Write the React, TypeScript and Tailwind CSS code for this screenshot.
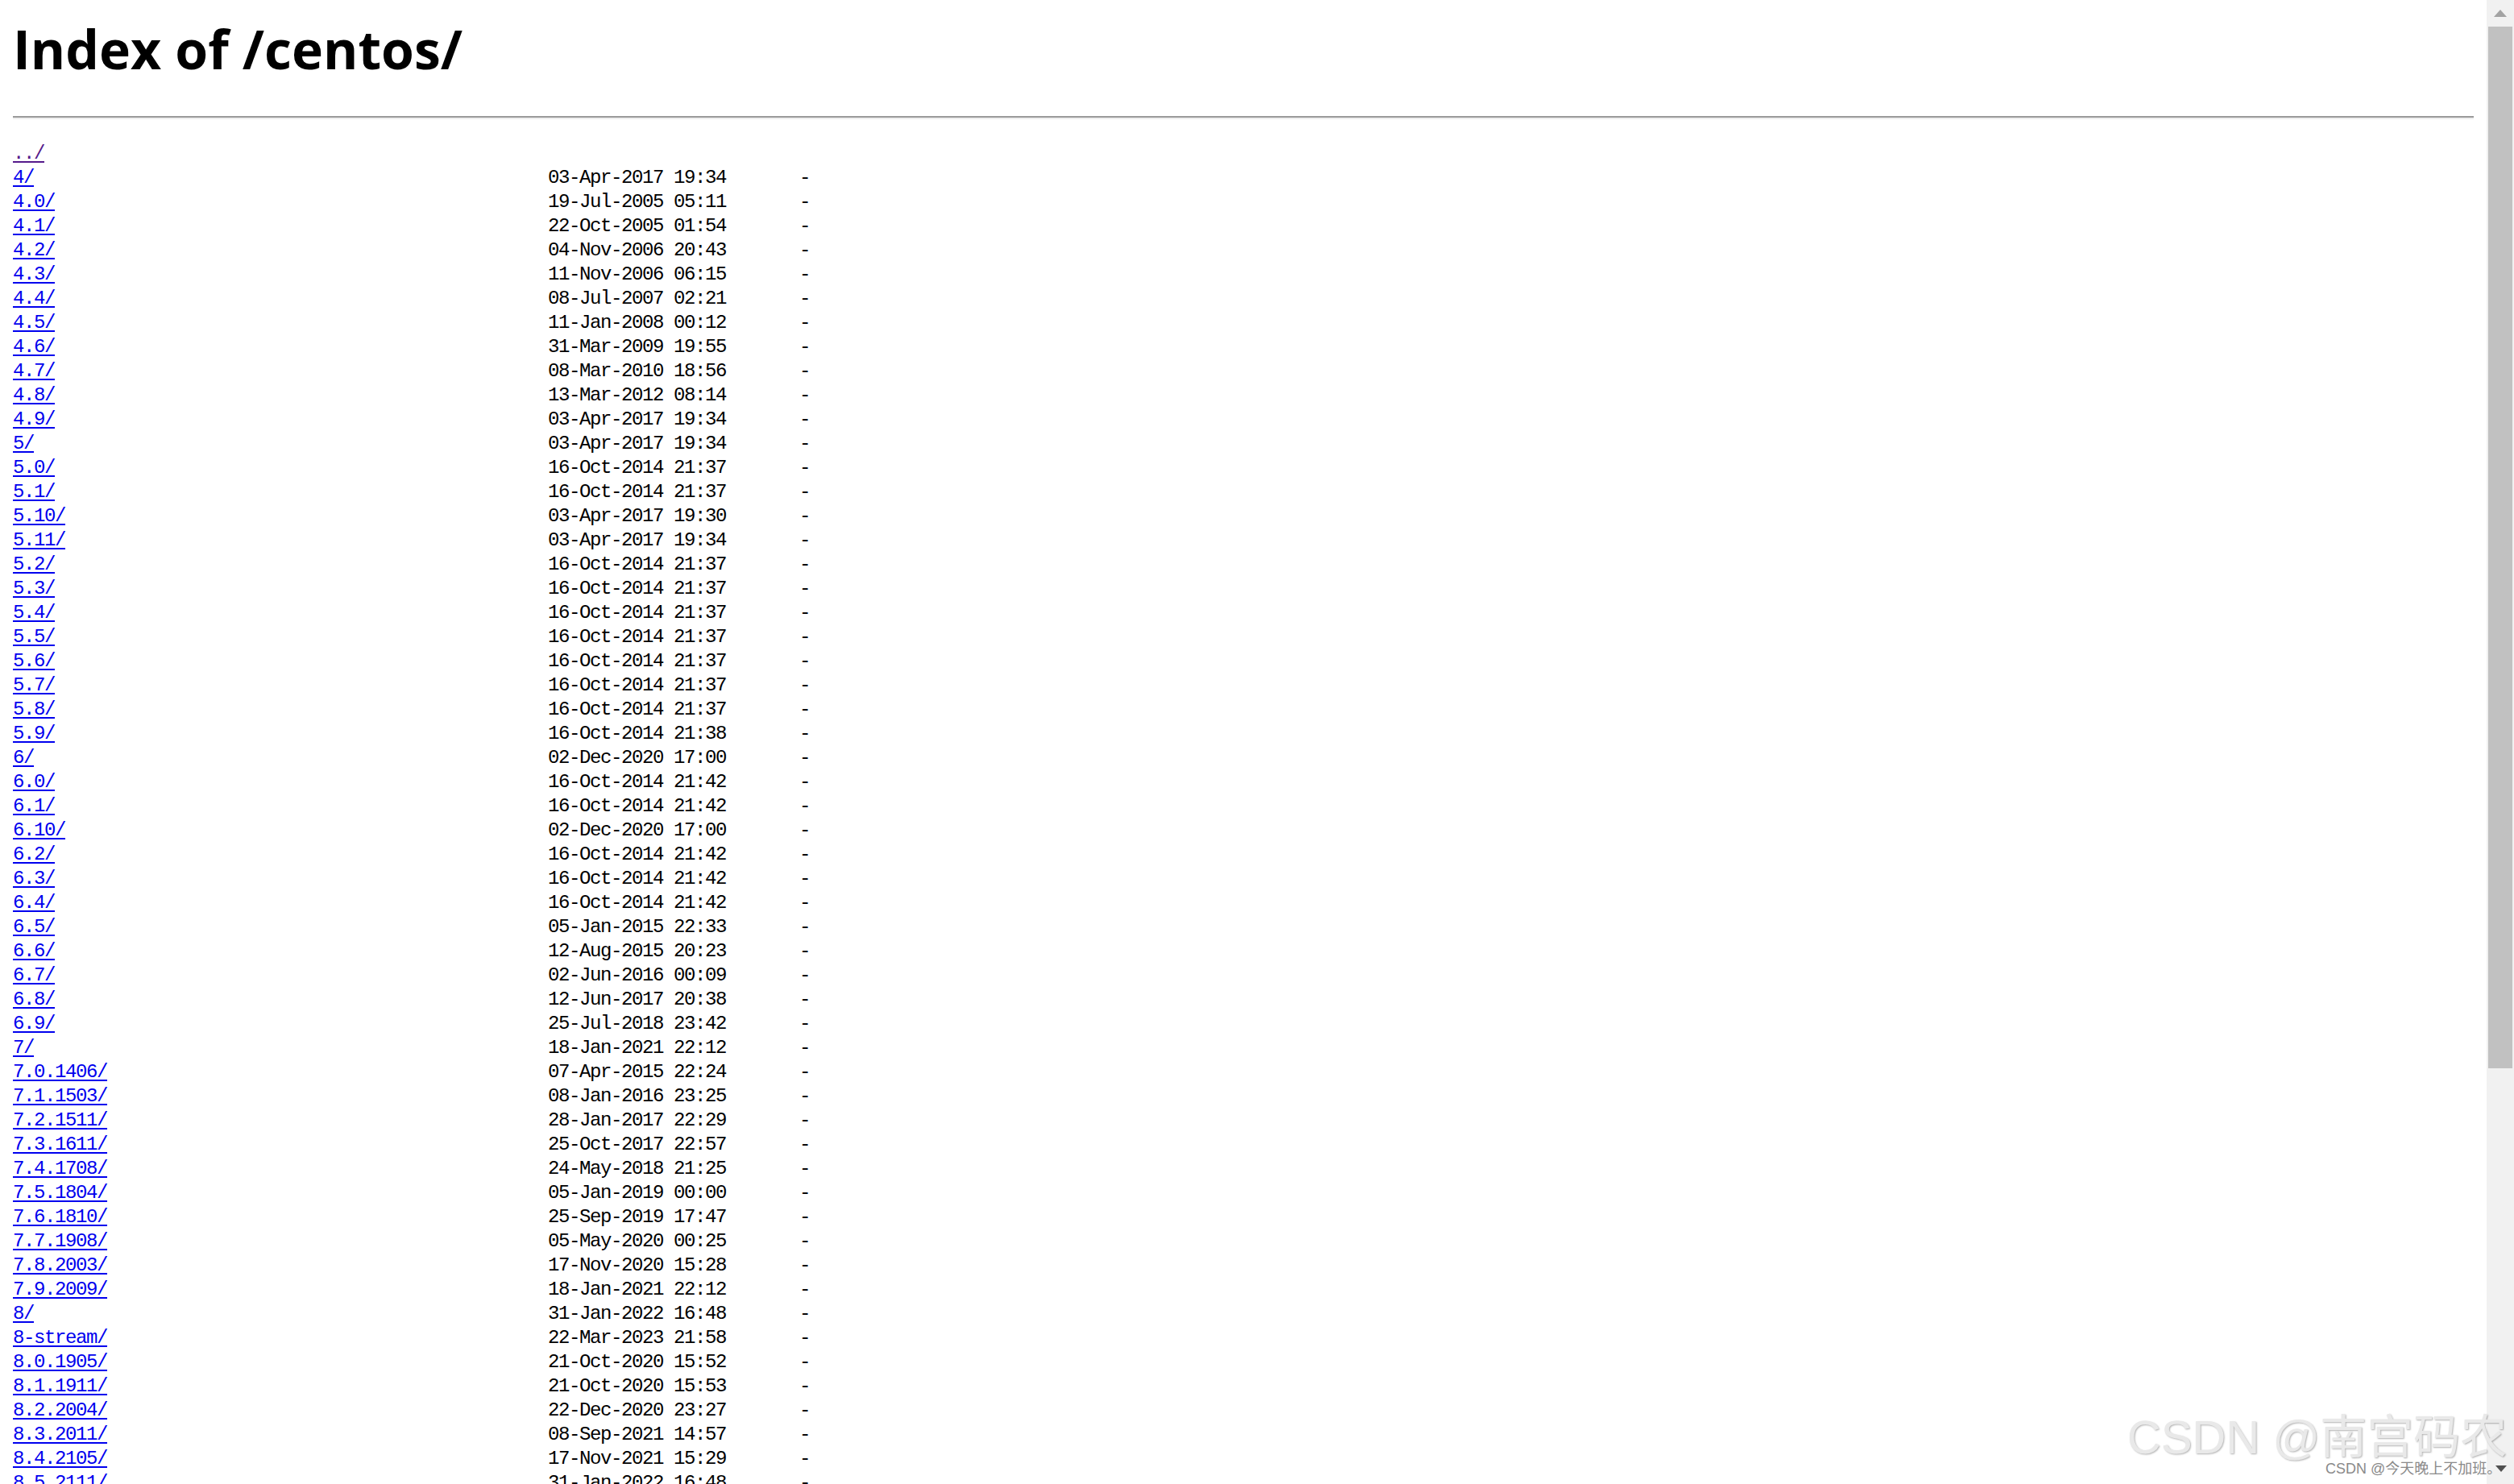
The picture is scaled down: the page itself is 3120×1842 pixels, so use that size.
type Entry = {
  name: string,
  date?: string,
  visited?: boolean
}

const entries: Entry[] = [
  { name: '../', visited: true },
  { name: '4/', date: '03-Apr-2017 19:34' },
  { name: '4.0/', date: '19-Jul-2005 05:11' },
  { name: '4.1/', date: '22-Oct-2005 01:54' },
  { name: '4.2/', date: '04-Nov-2006 20:43' },
  { name: '4.3/', date: '11-Nov-2006 06:15' },
  { name: '4.4/', date: '08-Jul-2007 02:21' },
  { name: '4.5/', date: '11-Jan-2008 00:12' },
  { name: '4.6/', date: '31-Mar-2009 19:55' },
  { name: '4.7/', date: '08-Mar-2010 18:56' },
  { name: '4.8/', date: '13-Mar-2012 08:14' },
  { name: '4.9/', date: '03-Apr-2017 19:34' },
  { name: '5/', date: '03-Apr-2017 19:34' },
  { name: '5.0/', date: '16-Oct-2014 21:37' },
  { name: '5.1/', date: '16-Oct-2014 21:37' },
  { name: '5.10/', date: '03-Apr-2017 19:30' },
  { name: '5.11/', date: '03-Apr-2017 19:34' },
  { name: '5.2/', date: '16-Oct-2014 21:37' },
  { name: '5.3/', date: '16-Oct-2014 21:37' },
  { name: '5.4/', date: '16-Oct-2014 21:37' },
  { name: '5.5/', date: '16-Oct-2014 21:37' },
  { name: '5.6/', date: '16-Oct-2014 21:37' },
  { name: '5.7/', date: '16-Oct-2014 21:37' },
  { name: '5.8/', date: '16-Oct-2014 21:37' },
  { name: '5.9/', date: '16-Oct-2014 21:38' },
  { name: '6/', date: '02-Dec-2020 17:00' },
  { name: '6.0/', date: '16-Oct-2014 21:42' },
  { name: '6.1/', date: '16-Oct-2014 21:42' },
  { name: '6.10/', date: '02-Dec-2020 17:00' },
  { name: '6.2/', date: '16-Oct-2014 21:42' },
  { name: '6.3/', date: '16-Oct-2014 21:42' },
  { name: '6.4/', date: '16-Oct-2014 21:42' },
  { name: '6.5/', date: '05-Jan-2015 22:33' },
  { name: '6.6/', date: '12-Aug-2015 20:23' },
  { name: '6.7/', date: '02-Jun-2016 00:09' },
  { name: '6.8/', date: '12-Jun-2017 20:38' },
  { name: '6.9/', date: '25-Jul-2018 23:42' },
  { name: '7/', date: '18-Jan-2021 22:12' },
  { name: '7.0.1406/', date: '07-Apr-2015 22:24' },
  { name: '7.1.1503/', date: '08-Jan-2016 23:25' },
  { name: '7.2.1511/', date: '28-Jan-2017 22:29' },
  { name: '7.3.1611/', date: '25-Oct-2017 22:57' },
  { name: '7.4.1708/', date: '24-May-2018 21:25' },
  { name: '7.5.1804/', date: '05-Jan-2019 00:00' },
  { name: '7.6.1810/', date: '25-Sep-2019 17:47' },
  { name: '7.7.1908/', date: '05-May-2020 00:25' },
  { name: '7.8.2003/', date: '17-Nov-2020 15:28' },
  { name: '7.9.2009/', date: '18-Jan-2021 22:12' },
  { name: '8/', date: '31-Jan-2022 16:48' },
  { name: '8-stream/', date: '22-Mar-2023 21:58' },
  { name: '8.0.1905/', date: '21-Oct-2020 15:52' },
  { name: '8.1.1911/', date: '21-Oct-2020 15:53' },
  { name: '8.2.2004/', date: '22-Dec-2020 23:27' },
  { name: '8.3.2011/', date: '08-Sep-2021 14:57' },
  { name: '8.4.2105/', date: '17-Nov-2021 15:29' },
  { name: '8.5.2111/', date: '31-Jan-2022 16:48' },
]

function ListingRow({ entry }: { entry: Entry }) {
  return (
    <div className="grid grid-cols-[664px_312px_40px] h-[30px] leading-[30px] whitespace-pre">
      <a
        href="#"
        className={`underline decoration-2 underline-offset-[3px] justify-self-start ${entry.visited ? 'text-[#551a8b]' : 'text-[#0000ee]'}`}
      >
        {entry.name}
      </a>
      <span className="text-black">{entry.date ?? ''}</span>
      <span className="text-black">{entry.date ? '-' : ''}</span>
    </div>
  )
}

function Scrollbar() {
  return (
    <div className="w-[34px] h-full flex flex-col bg-[#f1f1f1] shrink-0">
      <div className="h-[33px] flex items-center justify-center">
        <svg width="16" height="9" viewBox="0 0 16 9">
          <path d="M8 0 L16 9 L0 9 Z" fill="#a3a3a3" />
        </svg>
      </div>
      <div className="h-[1293px] mx-[2px] bg-[#c1c1c1]"></div>
      <div className="flex-1"></div>
      <div className="h-[33px] flex items-start justify-center pt-[10px] pl-[2px]">
        <svg width="14" height="8" viewBox="0 0 14 8">
          <path d="M0 0 L14 0 L7 8 Z" fill="#505050" />
        </svg>
      </div>
    </div>
  )
}

export default function App() {
  return (
    <div className="relative flex w-[3120px] h-[1842px] overflow-hidden bg-white">
      <main className="flex-1 min-w-0 px-4">
        <h1 className="pt-[23px] text-[66px] leading-[74px] font-bold text-black font-['Open_Sans','Noto_Sans',sans-serif]">
          Index of /centos/
        </h1>
        <hr className="mt-[47px] h-0 border-0 border-t-2 border-t-[#9a9a9a] border-b-2 border-b-[#eeeeee]" />
        <div className="mt-[28px] text-[24px] tracking-[-1.4px] font-['Liberation_Mono',monospace]">
          {entries.map((entry) => (
            <ListingRow key={entry.name} entry={entry} />
          ))}
        </div>
      </main>
      <Scrollbar />

      <div className="absolute left-[2640px] top-[1752px] pointer-events-none">
        <div className="text-[58px] leading-[64px] whitespace-nowrap text-[#e9e9e9] [text-shadow:1px_1px_2px_rgba(0,0,0,0.3)] font-['Liberation_Sans','Noto_Sans_CJK_SC',sans-serif]">
          CSDN @南宫码农
        </div>
      </div>
      <div className="absolute left-[2886px] top-[1812px] pointer-events-none">
        <div className="text-[18px] leading-[22px] whitespace-nowrap text-[#8a8a8a] font-['Liberation_Sans','Noto_Sans_CJK_SC',sans-serif]">
          CSDN @今天晚上不加班。
        </div>
      </div>
    </div>
  )
}
